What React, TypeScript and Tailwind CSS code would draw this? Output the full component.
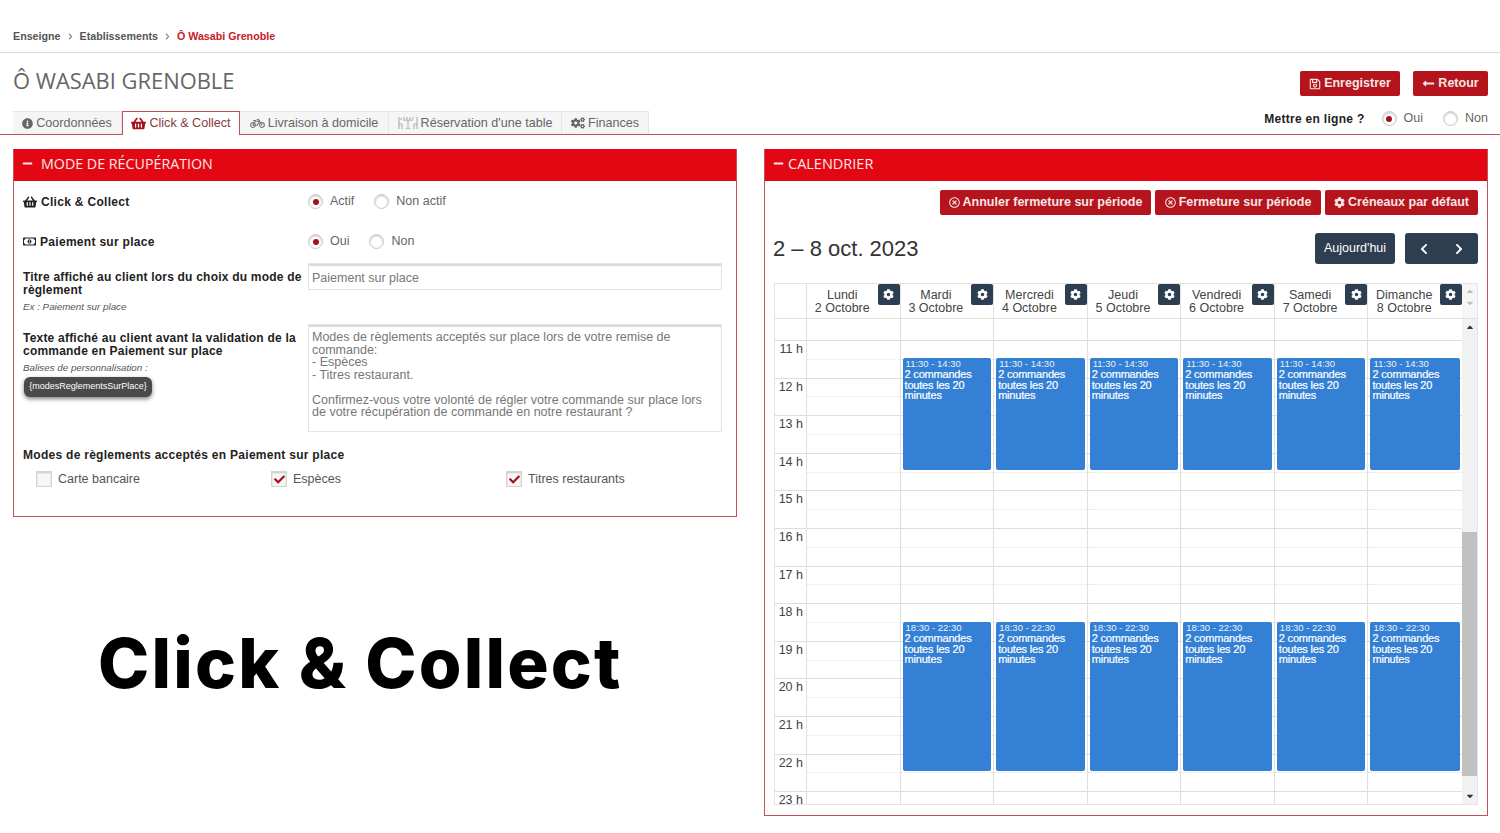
import React from 'react'
import {
  FaBicycle,
  FaChevronLeft,
  FaChevronRight,
  FaCog,
  FaCogs,
  FaInfoCircle,
  FaLongArrowAltLeft,
  FaMinus,
  FaRegMoneyBillAlt,
  FaRegSave,
  FaRegTimesCircle,
  FaShoppingBasket,
  FaCaretUp,
  FaCaretDown,
  FaCheck,
} from 'react-icons/fa'

const arial = "font-['Liberation_Sans',Arial,sans-serif]"
const openSans = "font-['Open_Sans',sans-serif]"

const days = [
  { name: 'Lundi', date: '2 Octobre', open: false },
  { name: 'Mardi', date: '3 Octobre', open: true },
  { name: 'Mercredi', date: '4 Octobre', open: true },
  { name: 'Jeudi', date: '5 Octobre', open: true },
  { name: 'Vendredi', date: '6 Octobre', open: true },
  { name: 'Samedi', date: '7 Octobre', open: true },
  { name: 'Dimanche', date: '8 Octobre', open: true },
]

const hours = [11, 12, 13, 14, 15, 16, 17, 18, 19, 20, 21, 22, 23]

const TableIcon = () => (
  <svg width="20" height="12" viewBox="0 0 20 12" fill="none" stroke="#a8a8a8" strokeWidth="1">
    <path d="M1 0v12M1 7h3v5M19 0v12M19 7h-3v5M5 3h10M10 3v9M7 12h6" />
    <path d="M3 1v2M6 0v2M9 0v2M12 0v2M15 0v2" />
  </svg>
)

const Radio = ({ checked, label }: { checked?: boolean; label: string }) => (
  <div className="flex items-center gap-[7px]">
    <span className="flex h-[15px] w-[15px] items-center justify-center rounded-full border border-[#c8c8c8] bg-white shadow-[inset_0_1px_2px_rgba(0,0,0,0.25)]">
      {checked && <span className="h-[6px] w-[6px] rounded-full bg-[#a3121c]"></span>}
    </span>
    <span className="text-[12.5px] text-[#666]">{label}</span>
  </div>
)

const Check = ({ checked, label }: { checked?: boolean; label: string }) => (
  <div className="flex items-center gap-[6px]">
    <span className="flex h-[16px] w-[16px] items-center justify-center border border-[#d4d4d4] bg-[#f7f7f7] shadow-[inset_0_1px_2px_rgba(0,0,0,0.2)]">
      {checked && <FaCheck size={11} className="text-[#a3121c]" />}
    </span>
    <span className="text-[12.5px] text-[#555]">{label}</span>
  </div>
)

const RedButton = ({ icon, label, className }: { icon: React.ReactNode; label: string; className: string }) => (
  <button className={`flex items-center justify-center gap-[3px] rounded-[2px] bg-[#b5141d] text-[12.5px] font-bold text-[#f6e6e6] ${className}`}>
    {icon}
    {label}
  </button>
)

const Tab = ({ icon, label, active, className }: { icon: React.ReactNode; label: string; active?: boolean; className: string }) => (
  <div
    className={
      active
        ? `z-10 -mb-px flex h-[24px] items-center justify-center gap-[3px] border border-b-0 border-[#c4505a] bg-white text-[12.6px] text-[#8a3a3f] ${className}`
        : `flex h-[23px] items-center justify-center gap-[3px] border-t border-r border-[#e6e6e6] bg-[#f5f5f5] text-[12.6px] text-[#666] ${className}`
    }
  >
    {icon}
    {label}
  </div>
)

const Event = ({ time, className }: { time: string; className: string }) => (
  <div className={`absolute right-[2px] left-[2px] rounded-[2px] bg-[#3480d4] pl-[2px] text-white ${className}`}>
    <div className="pl-[1px] text-[9.5px] leading-[11px] text-[#e8f1fb]">{time}</div>
    <div className="text-[11px] leading-[10.6px] tracking-[-0.2px] [-webkit-text-stroke:0.2px_white]">2 commandes toutes les 20 minutes</div>
  </div>
)

const HourSlot = ({ first }: { first?: boolean }) => (
  <div className={first ? 'h-[21px] shrink-0' : 'flex h-[37.6px] shrink-0 flex-col border-t border-[#dedede]'}>
    {!first && <div className="h-[18.8px] border-b border-dotted border-[#e4e4e4]"></div>}
  </div>
)

const Calendar = () => (
  <div className="mt-[19px] ml-[1px] w-[704px] border border-[#e4e4e4]">
    <div className="flex h-[35px] border-b border-[#e0e0e0]">
      <div className="w-[31px] shrink-0"></div>
      <div className="grid flex-1 grid-cols-7 border-l border-[#e0e0e0]">
        {days.map((d) => (
          <div key={d.name} className="flex border-r border-[#e0e0e0] last:border-r-0">
            <div className="flex-1 pt-[5px] text-center text-[12.5px] leading-[12.5px] text-[#444]">
              <div>{d.name}</div>
              <div>{d.date}</div>
            </div>
            <div className="flex h-[21px] w-[22px] items-center justify-center rounded-[2px] bg-[#2c3e50] text-white">
              <FaCog size={11} />
            </div>
          </div>
        ))}
      </div>
      <div className="flex w-[15px] shrink-0 flex-col items-center bg-[#f6f6f6] text-[#bdbdbd]">
        <FaCaretUp size={10} className="mt-[2px]" />
        <FaCaretDown size={10} className="mt-[2px]" />
      </div>
    </div>
    <div className="flex h-[485px] overflow-hidden">
      <div className="flex w-[31px] shrink-0 flex-col">
        <HourSlot first />
        {hours.map((h) => (
          <div key={h} className="h-[37.6px] shrink-0 border-t border-[#dedede] pt-[1px] pr-[3px] text-right text-[12.5px] leading-[14px] text-[#444]">
            {h} h
          </div>
        ))}
      </div>
      <div className="grid flex-1 grid-cols-7 border-l border-[#e0e0e0]">
        {days.map((d) => (
          <div key={d.name} className="relative flex flex-col border-r border-[#e0e0e0] last:border-r-0">
            <HourSlot first />
            {hours.map((h) => (
              <HourSlot key={h} />
            ))}
            {d.open && <Event time="11:30 - 14:30" className="top-[39px] h-[112px]" />}
            {d.open && <Event time="18:30 - 22:30" className="top-[303px] h-[149px]" />}
          </div>
        ))}
      </div>
      <div className="flex w-[15px] shrink-0 flex-col items-center bg-[#f1f1f1] text-[#333]">
        <FaCaretUp size={10} className="mt-[3px]" />
        <div className="mt-[200px] h-[244px] w-full bg-[#c1c1c1]"></div>
        <FaCaretDown size={10} className="mt-[15px]" />
      </div>
    </div>
  </div>
)

export default function App() {
  return (
    <div className={`h-[833px] w-[1500px] overflow-hidden bg-white ${arial}`}>
      <div className="flex h-[53px] items-end gap-[6px] border-b border-[#d8d8d8] pb-[9px] pl-[13px] text-[10.7px] leading-[14px] font-bold text-[#555]">
        <span>Enseigne</span>
        <FaChevronRight size={7} className="mb-[3px] text-[#888]" />
        <span>Etablissements</span>
        <FaChevronRight size={7} className="mb-[3px] text-[#888]" />
        <span className="text-[#c5202b]">Ô Wasabi Grenoble</span>
      </div>

      <div className="flex h-[58px] items-start justify-between pr-[12px] pl-[13px]">
        <h1 className={`mt-[13px] text-[21.9px] leading-[30px] text-[#666] ${openSans}`}>Ô WASABI GRENOBLE</h1>
        <div className="mt-[18px] flex gap-[13px]">
          <RedButton icon={<FaRegSave size={12} />} label="Enregistrer" className="h-[25px] w-[100px]" />
          <RedButton icon={<FaLongArrowAltLeft size={13} />} label="Retour" className="h-[25px] w-[75px]" />
        </div>
      </div>

      <div className="flex h-[24px] items-end justify-between border-b border-[#c4505a] pr-[12px] pl-[13px]">
        <div className="flex items-end">
          <Tab icon={<FaInfoCircle size={11} />} label="Coordonnées" className="w-[109px]" />
          <Tab icon={<FaShoppingBasket size={15} className="text-[#a3121c]" />} label="Click & Collect" active className="w-[118px]" />
          <Tab icon={<FaBicycle size={15} className="text-[#777]" />} label="Livraison à domicile" className="w-[149px]" />
          <Tab icon={<TableIcon />} label="Réservation d'une table" className="w-[173px]" />
          <Tab icon={<FaCogs size={14} className="text-[#666]" />} label="Finances" className="w-[87px]" />
        </div>
        <div className="flex items-center pb-[6px]">
          <span className="mr-[17px] text-[12px] font-bold tracking-[0.3px] text-[#222]">Mettre en ligne ?</span>
          <div className="mr-[20px]"><Radio checked label="Oui" /></div>
          <Radio label="Non" />
        </div>
      </div>

      <div className="mt-[14px] flex gap-[27px] pl-[13px]">
        <div className="w-[724px]">
          <section className="h-[368px] border border-t-0 border-[#c4505a]">
            <div className={`flex h-[32px] items-center gap-[8px] bg-[#e30613] pb-[3px] pl-[8px] text-[14.25px] text-[#fde8e8] ${openSans}`}>
              <FaMinus size={11} />
              <span>MODE DE RÉCUPÉRATION</span>
            </div>
            <div className="pr-[14px] pl-[9px]">
              <div className="flex h-[40px] items-center">
                <div className="flex w-[285px] items-center gap-[4px] pt-[2px] text-[12px] font-bold tracking-[0.3px] text-[#222]">
                  <FaShoppingBasket size={14} />
                  Click &amp; Collect
                </div>
                <div className="flex items-center gap-[20px] pt-[1px]">
                  <Radio checked label="Actif" />
                  <Radio label="Non actif" />
                </div>
              </div>
              <div className="flex h-[39px] items-center">
                <div className="flex w-[285px] items-center gap-[4px] pt-[2px] text-[12px] font-bold tracking-[0.3px] text-[#222]">
                  <FaRegMoneyBillAlt size={13} />
                  Paiement sur place
                </div>
                <div className="flex items-center gap-[20px] pt-[2px]">
                  <Radio checked label="Oui" />
                  <Radio label="Non" />
                </div>
              </div>
              <div className="mt-[3px] flex h-[61px]">
                <div className="w-[285px] pt-[8px]">
                  <div className="text-[12px] leading-[13px] font-bold tracking-[0.21px] text-[#222]">Titre affiché au client lors du choix du mode de règlement</div>
                  <div className="mt-[4px] text-[9.8px] leading-[12px] text-[#555] italic">Ex : Paiement sur place</div>
                </div>
                <div className="flex h-[27px] flex-1 items-center border border-[#e4e4e4] pt-[3px] pl-[3px] text-[12.5px] text-[#777] shadow-[inset_0_2px_1px_rgba(0,0,0,0.15)]">
                  Paiement sur place
                </div>
              </div>
              <div className="flex h-[108px]">
                <div className="w-[285px] pt-[8px]">
                  <div className="text-[12px] leading-[13px] font-bold tracking-[0.21px] text-[#222]">Texte affiché au client avant la validation de la commande en Paiement sur place</div>
                  <div className="mt-[4px] text-[9.8px] leading-[12px] text-[#555] italic">Balises de personnalisation :</div>
                  <div className="mt-[3px] ml-[1px] flex h-[20px] w-[128px] items-center justify-center rounded-[6px] bg-[#4a4a4a] text-[9px] text-white shadow-[0_2px_4px_rgba(0,0,0,0.5)]">
                    {'{modesReglementsSurPlace}'}
                  </div>
                </div>
                <div className="flex-1 border border-[#e4e4e4] pt-[6px] pr-[14px] pl-[3px] text-[12.5px] leading-[12.5px] text-[#777] shadow-[inset_0_2px_1px_rgba(0,0,0,0.15)]">
                  <div>Modes de règlements acceptés sur place lors de votre remise de commande:</div>
                  <div>- Espèces</div>
                  <div>- Titres restaurant.</div>
                  <div className="mt-[12.5px]">Confirmez-vous votre volonté de régler votre commande sur place lors de votre récupération de commande en notre restaurant ?</div>
                </div>
              </div>
              <div className="mt-[16px] text-[12px] leading-[14px] font-bold tracking-[0.28px] text-[#222]">Modes de règlements acceptés en Paiement sur place</div>
              <div className="mt-[8px] grid w-[705px] grid-cols-[235px_235px_235px] pl-[13px]">
                <Check label="Carte bancaire" />
                <Check checked label="Espèces" />
                <Check checked label="Titres restaurants" />
              </div>
            </div>
          </section>
          <div className="mt-[106px] pl-[85px] font-['Inter',sans-serif] text-[69px] leading-[80px] font-extrabold tracking-[2.2px] text-black">Click &amp; Collect</div>
        </div>

        <section className="h-[667px] w-[724px] border border-t-0 border-[#c4505a]">
          <div className={`flex h-[32px] items-center gap-[4px] bg-[#e30613] pb-[3px] pl-[8px] text-[14.5px] text-[#fde8e8] ${openSans}`}>
            <FaMinus size={11} />
            <span>CALENDRIER</span>
          </div>
          <div className="pr-[9px] pl-[8px]">
            <div className="mt-[9px] flex justify-end gap-[4px]">
              <RedButton icon={<FaRegTimesCircle size={11} />} label="Annuler fermeture sur période" className="h-[25px] w-[211px]" />
              <RedButton icon={<FaRegTimesCircle size={11} />} label="Fermeture sur période" className="h-[25px] w-[166px]" />
              <RedButton icon={<FaCog size={11} />} label="Créneaux par défaut" className="h-[25px] w-[153px]" />
            </div>
            <div className="mt-[18px] flex h-[31px] items-center justify-between">
              <div className="text-[22px] text-[#333]">2 – 8 oct. 2023</div>
              <div className="flex gap-[10px]">
                <button className="h-[31px] w-[80px] rounded-[3px] bg-[#2c3e50] text-[12.5px] text-white">Aujourd'hui</button>
                <div className="flex h-[31px] w-[73px] items-center justify-between rounded-[3px] bg-[#2c3e50] px-[13px] text-white">
                  <FaChevronLeft size={12} />
                  <FaChevronRight size={12} />
                </div>
              </div>
            </div>
            <Calendar />
          </div>
        </section>
      </div>
    </div>
  )
}
